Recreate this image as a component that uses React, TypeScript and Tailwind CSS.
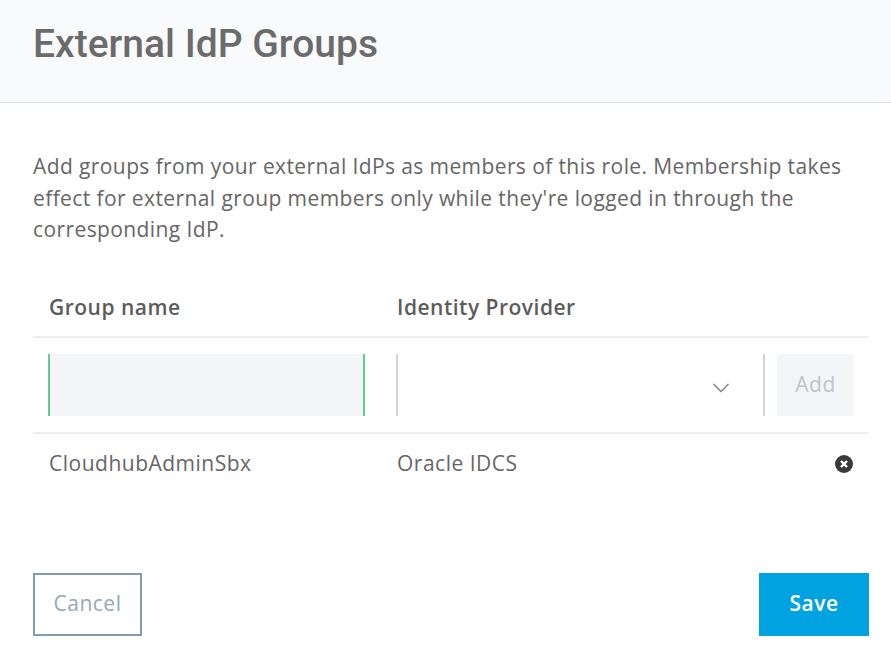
import { ChevronDown } from "lucide-react"

export default function App() {
  return (
    <div className="w-[891px] h-[653px] bg-white overflow-hidden font-['Open_Sans',sans-serif] text-[21px] tracking-[0.5px] text-[#5c5c5c]">
      {/* Header */}
      <div className="h-[103px] bg-[#f8fafc] border-b border-[#e4e6e8] px-[33px] pt-[19px]">
        <h1 className="font-['Roboto',sans-serif] font-medium text-[39px] tracking-normal leading-[50px] text-[#6b6b6b]">External IdP Groups</h1>
      </div>

      <div className="px-[33px] pr-[22px]">
        <p className="pt-[48px] leading-[31.5px] tracking-[0.4px] text-[#666666]">
          Add groups from your external IdPs as members of this role. Membership takes effect for external group members only while they're logged in through the corresponding IdP.
        </p>

        {/* Table header */}
        <div className="mt-[29px] h-[63px] pt-[6px] flex items-center border-b-2 border-[#eeeeee] font-semibold text-[#5c5c5c]">
          <div className="w-[364px] pl-[16px]">Group name</div>
          <div>Identity Provider</div>
        </div>

        {/* Add row */}
        <div className="h-[96px] flex items-center border-b-2 border-[#eeeeee] pl-[15px]">
          <div className="w-[317px] h-[62px] bg-[#f3f5f6] border-x-2 border-[#5fce8f]" />
          <div className="ml-[31px] w-[369px] h-[62px] border-x-2 border-[#d2d4d5] flex items-center justify-end pr-[28px] pt-[6px] text-[#8a8a8a]">
            <ChevronDown size={28} strokeWidth={1.5} />
          </div>
          <div className="ml-[12px] w-[77px] h-[62px] bg-[#f3f5f6] flex items-center justify-center text-[#c0c4c6]">Add</div>
        </div>

        {/* Group row */}
        <div className="h-[60px] flex items-center text-[#666666] pl-[16px] pr-[15px]">
          <div className="w-[348px]">CloudhubAdminSbx</div>
          <div className="flex-1">Oracle IDCS</div>
          <svg width="20" height="20" viewBox="0 0 20 20">
            <circle cx="10" cy="10" r="9" fill="#3a3a3a" />
            <path d="M7 7l6 6M13 7l-6 6" stroke="#ffffff" strokeWidth="2.4" />
          </svg>
        </div>

        {/* Footer */}
        <div className="mt-[79px] flex justify-between">
          <button className="w-[109px] h-[63px] border-2 border-[#7f9daf] bg-white text-[#93a8b5]">Cancel</button>
          <button className="w-[110px] h-[63px] bg-[#00a2df] font-semibold text-white">Save</button>
        </div>
      </div>
    </div>
  )
}
